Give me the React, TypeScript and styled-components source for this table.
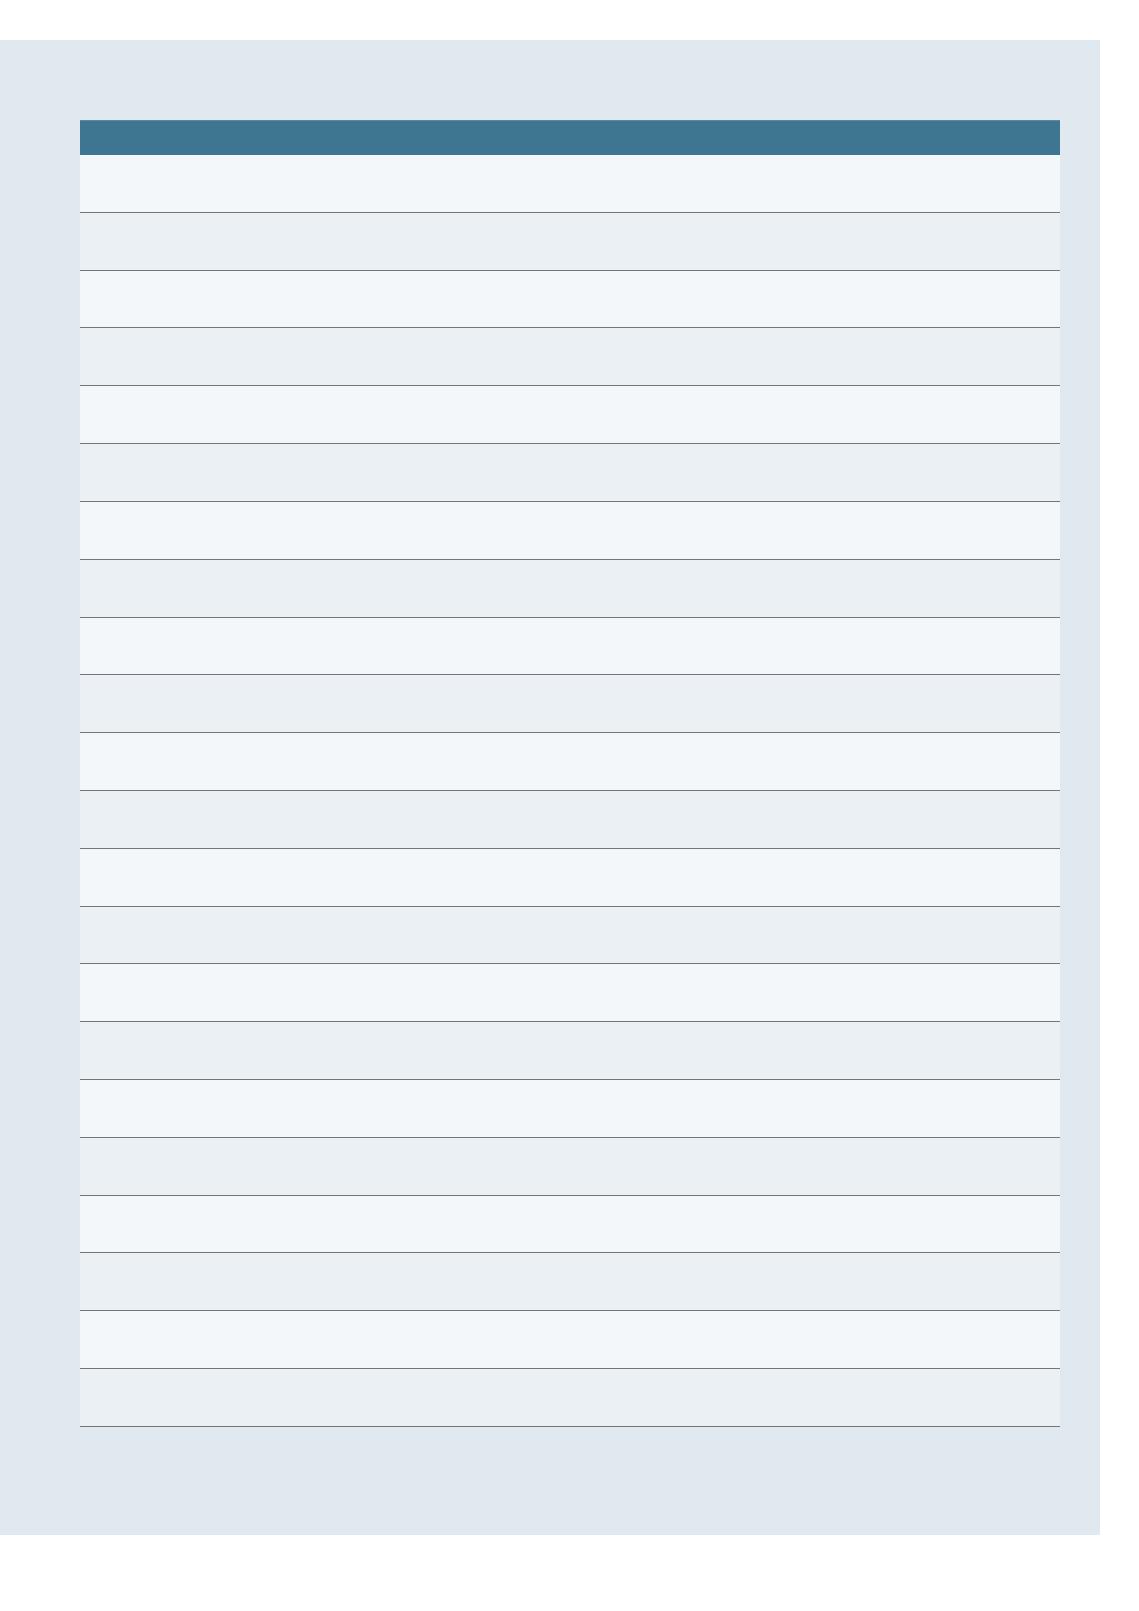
import React from 'react'
import styled, { createGlobalStyle } from 'styled-components'

const GlobalStyle = createGlobalStyle`
  html, body {
    margin: 0;
    padding: 0;
    background: #ffffff;
    font-family: "Liberation Sans", Arial, sans-serif;
  }
`

const Panel = styled.div`
  box-sizing: border-box;
  width: 1100px;
  height: 1495px;
  margin-top: 40px;
  padding: 80px 40px 0 80px;
  background: #e0e8f0;
`

const Table = styled.table`
  width: 980px;
  border-collapse: separate;
  border-spacing: 0;
  table-layout: fixed;
`

const HeadCell = styled.th`
  box-sizing: border-box;
  height: 35px;
  padding: 0;
  background: #3e7691;
  border-top: 1px solid #5a8aa3;
  color: #ffffff;
  font-size: 14px;
  font-weight: 600;
  text-align: left;
`

const Row = styled.tr<{ $odd: boolean }>`
  background: ${(p) => (p.$odd ? '#f3f7fa' : '#ebf0f4')};
`

const Cell = styled.td`
  box-sizing: border-box;
  height: 57.82px;
  padding: 0;
  border-bottom: 1px solid #737578;
  font-size: 14px;
  color: #33475b;
`

const columns = ['', '', '', '']
const rows = Array.from({ length: 22 }, (_, i) => i)

export default function App() {
  return (
    <>
      <GlobalStyle />
      <Panel>
        <Table>
          <thead>
            <tr>
              {columns.map((c, i) => (
                <HeadCell key={i}>{c}</HeadCell>
              ))}
            </tr>
          </thead>
          <tbody>
            {rows.map((r) => (
              <Row key={r} $odd={r % 2 === 0}>
                {columns.map((_, i) => (
                  <Cell key={i} />
                ))}
              </Row>
            ))}
          </tbody>
        </Table>
      </Panel>
    </>
  )
}
